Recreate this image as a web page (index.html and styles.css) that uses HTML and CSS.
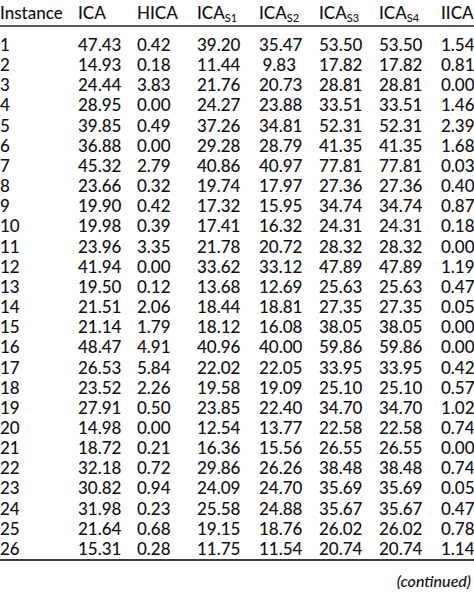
FILE: index.html
```html
<!DOCTYPE html>
<html>
<head>
<meta charset="utf-8">
<link rel="stylesheet" href="styles.css">
</head>
<body>
<div class="page">
  <div class="grid head">
    <div class="c first">Instance</div>
    <div class="c hl">ICA</div>
    <div class="c hl">HICA</div>
    <div class="c hl">ICA<span class="sub">S1</span></div>
    <div class="c hl">ICA<span class="sub">S2</span></div>
    <div class="c hl">ICA<span class="sub">S3</span></div>
    <div class="c hl">ICA<span class="sub">S4</span></div>
    <div class="c hl">IICA</div>
  </div>
  <div class="body" id="body"></div>
  <div class="note">(continued)</div>
</div>
<script>
const rows = [
["1","47.43","0.42","39.20","35.47","53.50","53.50","1.54"],
["2","14.93","0.18","11.44","9.83","17.82","17.82","0.81"],
["3","24.44","3.83","21.76","20.73","28.81","28.81","0.00"],
["4","28.95","0.00","24.27","23.88","33.51","33.51","1.46"],
["5","39.85","0.49","37.26","34.81","52.31","52.31","2.39"],
["6","36.88","0.00","29.28","28.79","41.35","41.35","1.68"],
["7","45.32","2.79","40.86","40.97","77.81","77.81","0.03"],
["8","23.66","0.32","19.74","17.97","27.36","27.36","0.40"],
["9","19.90","0.42","17.32","15.95","34.74","34.74","0.87"],
["10","19.98","0.39","17.41","16.32","24.31","24.31","0.18"],
["11","23.96","3.35","21.78","20.72","28.32","28.32","0.00"],
["12","41.94","0.00","33.62","33.12","47.89","47.89","1.19"],
["13","19.50","0.12","13.68","12.69","25.63","25.63","0.47"],
["14","21.51","2.06","18.44","18.81","27.35","27.35","0.05"],
["15","21.14","1.79","18.12","16.08","38.05","38.05","0.00"],
["16","48.47","4.91","40.96","40.00","59.86","59.86","0.00"],
["17","26.53","5.84","22.02","22.05","33.95","33.95","0.42"],
["18","23.52","2.26","19.58","19.09","25.10","25.10","0.57"],
["19","27.91","0.50","23.85","22.40","34.70","34.70","1.02"],
["20","14.98","0.00","12.54","13.77","22.58","22.58","0.74"],
["21","18.72","0.21","16.36","15.56","26.55","26.55","0.00"],
["22","32.18","0.72","29.86","26.26","38.48","38.48","0.74"],
["23","30.82","0.94","24.09","24.70","35.69","35.69","0.05"],
["24","31.98","0.23","25.58","24.88","35.67","35.67","0.47"],
["25","21.64","0.68","19.15","18.76","26.02","26.02","0.78"],
["26","15.31","0.28","11.75","11.54","20.74","20.74","1.14"]
];
const body = document.getElementById('body');
for (const r of rows) {
  const row = document.createElement('div');
  row.className = 'grid row';
  r.forEach((v, i) => {
    const c = document.createElement('div');
    c.className = i === 0 ? 'c first' : 'c num';
    c.textContent = v;
    row.appendChild(c);
  });
  body.appendChild(row);
}
</script>
</body>
</html>
```
FILE: styles.css
```css
html, body {
  margin: 0;
  padding: 0;
  background: #ffffff;
}
.page {
  width: 474px;
  height: 592px;
  overflow: hidden;
  font-family: "Lato", "Open Sans", sans-serif;
  font-size: 17px;
  font-weight: 500;
  color: #111111;
}
.grid {
  display: grid;
  grid-template-columns: 78px 59px 60px 62px 60px 60px 62px 33px;
}
.head {
  height: 25px;
  line-height: 25px;
  border-bottom: 2px solid #5a5a5a;
}
.body {
  padding-top: 8px;
  border-bottom: 2px solid #3c3c3c;
}
.row {
  height: 20.16px;
  line-height: 20.16px;
}
.c {
  white-space: nowrap;
}
.first {
  text-align: left;
}
.hl {
  text-align: left;
}
.num {
  text-align: right;
}
.row .num:nth-child(2) { padding-right: 20px; }
.row .num:nth-child(3) { padding-right: 30px; }
.row .num:nth-child(4) { padding-right: 24px; }
.row .num:nth-child(5) { padding-right: 23px; }
.row .num:nth-child(6) { padding-right: 20px; }
.row .num:nth-child(7) { padding-right: 24px; }
.row .num:nth-child(8) { padding-right: 2px; }
.sub {
  font-size: 11px;
  vertical-align: -3px;
  line-height: 0;
}
.note {
  margin-top: 10px;
  text-align: right;
  padding-right: 3px;
  font-style: italic;
  font-size: 16px;
  line-height: 20px;
}
```
